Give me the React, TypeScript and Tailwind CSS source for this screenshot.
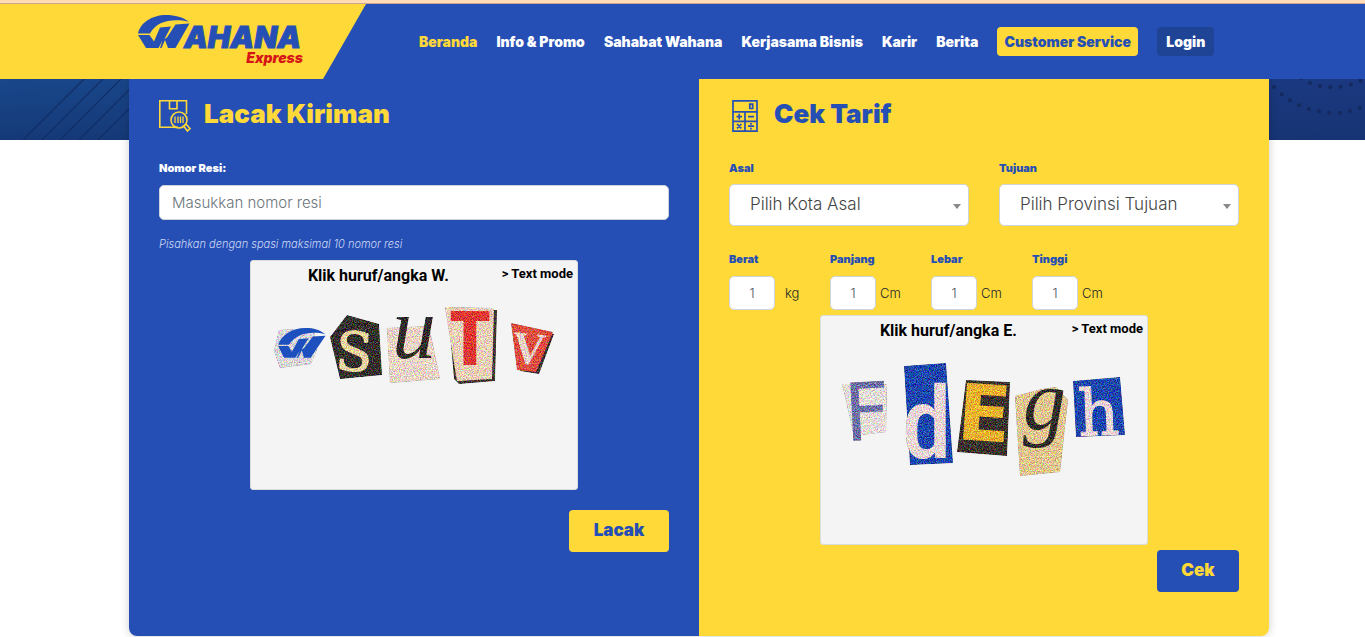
import React from "react";

const navLinks = ["Beranda", "Info & Promo", "Sahabat Wahana", "Kerjasama Bisnis", "Karir", "Berita"];

function Emblem() {
  return (
    <>
      <path d="M0 18.6C2 8 14 0 28 0C37 0 45 2 51 7C46 5.6 43 5.3 38 5.3C27 5.3 17 9 12 18.6Z" />
      <path d="M0 20H11.5L16 26.5L22 12.5L33 11.5L26.5 24L29 22.5L37.5 9.5L51.5 8.5L37.5 33H30L27 25L23.5 33H22L24.5 25.5L20.5 33H8Z" />
    </>
  );
}

function Logo() {
  return (
    <svg viewBox="0 0 168 54" className="h-[54px] w-[168px] shrink-0 overflow-visible" role="img" aria-label="Wahana Express">
      <g fill="#264fb5">
        <Emblem />
        <text x="46" y="33" fontFamily="Inter, sans-serif" fontWeight="900" fontStyle="italic" fontSize="30" stroke="#264fb5" strokeWidth="0.9">AHANA</text>
      </g>
      <text x="165" y="48" textAnchor="end" fill="#d61518" fontFamily="Inter, sans-serif" fontWeight="900" fontStyle="italic" fontSize="14">Express</text>
    </svg>
  );
}

function Header() {
  return (
    <header className="relative z-10 border-t-[3px] border-[#ffdcb5] bg-[#264fb5]">
      <div className="flex h-[76px] items-center border-t border-[#c9a68f]">
        <div className="flex h-full w-[366px] shrink-0 items-center justify-end bg-[#ffd938] pr-[60px] [clip-path:polygon(0_0,100%_0,323px_100%,0_100%)]">
          <a href="#beranda"><Logo /></a>
        </div>
        <nav className="ml-[53px] flex items-center gap-[19px] whitespace-nowrap text-[14px] font-black text-white">
          {navLinks.map((label, i) => (
            <a key={label} href="#" className={i === 0 ? "text-[#ffd938]" : ""}>{label}</a>
          ))}
          <a href="#" className="flex h-[29px] w-[141px] items-center justify-center rounded bg-[#ffd938] text-[#264fb5]">Customer Service</a>
          <a href="#" className="flex h-[29px] w-[57px] items-center justify-center rounded bg-[#1f4496]">Login</a>
        </nav>
      </div>
    </header>
  );
}

function TrackIcon() {
  return (
    <svg viewBox="0 0 32 32" className="size-8" fill="none" stroke="#ffd938" strokeWidth="1.6" aria-hidden="true">
      <path d="M19 27.3H.8V.8H27.5V14M10.5 1V8.8H18V1" />
      <circle cx="20" cy="20" r="8" />
      <path d="M16 16.5V23M19 16.5V23M21.5 16.5V23M24 16.5V23" strokeWidth="1.3" />
      <path d="M24.5 26L27 24L31 28.5L28.4 31Z" />
    </svg>
  );
}

function CalcIcon() {
  return (
    <svg viewBox="0 0 32 32" className="size-8" fill="none" stroke="#264fb5" strokeWidth="1.7" aria-hidden="true">
      <path d="M4 .9H28V31.1H4ZM4 11.8H28M4 21.3H28M16 11.8V31M20.8 4.2H23.7V8.5H20.8Z" />
      <path d="M7.5 16.6H13M10.2 13.8V19.4M19 16.6H25M8 24L12.4 28.4M12.4 24L8 28.4M19 26.2H25M22 23V24.8M22 27.7V29.4" />
    </svg>
  );
}

function Noise({ id }: { id: string }) {
  return (
    <filter id={id} x="0" y="0" width="100%" height="100%" colorInterpolationFilters="sRGB">
      <feTurbulence type="fractalNoise" baseFrequency="0.85" numOctaves={3} seed={4} />
      <feColorMatrix values="2.2 0 0 0 -0.6  0 2.2 0 0 -0.6  0 0 2.2 0 -0.6  0 0 0 0 1" result="n" />
      <feComposite in="SourceGraphic" in2="n" operator="arithmetic" k2={1} k3={0.5} k4={-0.25} result="m" />
      <feComposite in="m" in2="SourceAlpha" operator="in" />
    </filter>
  );
}

function TrackLetters() {
  return (
    <svg viewBox="1 0 326 202" className="block w-full overflow-visible" role="img" aria-label="W S u T V">
      <defs><Noise id="grain-a" /></defs>
      <g filter="url(#grain-a)" transform="translate(0 -27)">
        <path d="M29 70L64 68L67 90L61 104L30 108L24 91Z" fill="#dcd6dc" />
        <path d="M97 55L129 64L132 115L90 119L80 77Z" fill="#34302b" />
        <text x="86" y="111" fontFamily="DejaVu Serif, serif" fontSize="54" fill="#efd5a0" stroke="#efd5a0" transform="rotate(4 106 90)">S</text>
        <path d="M137 68L179 66L190 119L140 123Z" fill="#eed6c6" />
        <text x="142" y="98" fontFamily="Liberation Serif, serif" fontStyle="italic" fontSize="88" fill="#302b27">u</text>
        <path d="M198 49L247 50L245 121L209 124L204 119Z" fill="#3c332f" />
        <path d="M195 47L244 48L242 119L207 121Z" fill="#efd0b8" />
        <text x="220" y="105" textAnchor="middle" fontFamily="Roboto Condensed, Roboto, sans-serif" fontWeight="900" fontSize="76" fill="#e23832">T</text>
        <path d="M264 65L304 74L289 114L270 111Z" fill="#3c3030" />
        <path d="M261 63L303 72L286 112L267 110Z" fill="#e04f40" />
        <text x="262" y="104" fontFamily="Liberation Serif, serif" fontWeight="700" fontSize="46" fill="#efd6cb" transform="rotate(6 280 88)">V</text>
      </g>
      <g fill="#1d50be" transform="translate(30 41) skewX(-6) scale(0.9)">
        <Emblem />
      </g>
    </svg>
  );
}

function RateLetters() {
  return (
    <svg viewBox="1 0 326 202" className="block w-full overflow-visible" role="img" aria-label="F d E g h">
      <defs><Noise id="grain-b" /></defs>
      <g filter="url(#grain-b)" transform="translate(0 -27)">
        <path d="M22 69L67 69L66 117L34 121Z" fill="#e9dfdb" />
        <text x="24" y="125" fontFamily="DejaVu Sans, sans-serif" fontSize="80" fill="#6d70a4" transform="rotate(-3 48 96)">F</text>
        <path d="M84 51L126 48L133 148L90 150Z" fill="#1a47ad" />
        <text x="82" y="143" fontFamily="Roboto Condensed, Roboto, sans-serif" fontWeight="500" fontSize="100" fill="#f0d8d8">d</text>
        <path d="M146 65L190 67L187 141L137 137Z" fill="#3a322c" />
        <text x="138" y="126" fontFamily="DejaVu Sans, sans-serif" fontWeight="700" fontSize="78" fill="#edb22e" transform="rotate(4 165 98)">E</text>
        <path d="M195 81L222 74L236 72L248 85L240 157L200 161Z" fill="#e4c690" />
        <text x="203" y="114" fontFamily="Liberation Serif, serif" fontStyle="italic" fontSize="86" fill="#302b27">g</text>
        <path d="M253 66L300 62L305 120L256 122Z" fill="#1a47ad" />
        <text x="258" y="120" fontFamily="DejaVu Serif, serif" fontSize="64" fill="#f0d8d8" stroke="#f0d8d8" transform="rotate(-2 278 96)">h</text>
      </g>
    </svg>
  );
}

function LetterPicker({ target, children }: { target: string; children: React.ReactNode }) {
  return (
    <div className="mx-auto w-[328px] rounded-[3px] border border-[#dcdcdc] bg-[#f4f4f4] font-['Roboto',sans-serif] text-black">
      <div className="flex h-[26px] items-center px-1 font-bold">
        <p className="flex-1 pt-1 text-center text-[16px] leading-5">Klik huruf/angka {target}.</p>
        <button type="button" className="text-[13px] leading-5">&gt; Text mode</button>
      </div>
      {children}
    </div>
  );
}

function SelectField({ id, label, text }: { id: string; label: string; text: string }) {
  return (
    <div className="flex-1">
      <label htmlFor={id} className="block text-[11px] leading-4 font-black">{label}</label>
      <div className="relative mt-2">
        <select id={id} className="h-[42px] w-full appearance-none rounded-[5px] border border-[#ced4da] bg-white pr-8 pb-px pl-5 text-[17px] font-light text-[#444]">
          <option>{text}</option>
        </select>
        <span className="pointer-events-none absolute top-5 right-2 border-x-4 border-t-5 border-x-transparent border-t-[#888]" />
      </div>
    </div>
  );
}

function SizeField({ id, label, unit }: { id: string; label: string; unit: string }) {
  return (
    <div className="w-[101px]">
      <label htmlFor={id} className="block text-[11px] leading-4 font-black">{label}</label>
      <div className={unit === "kg" ? "mt-[9px] flex items-center gap-2.5" : "mt-[9px] flex items-center gap-1"}>
        <input id={id} defaultValue="1" className="h-[34px] w-[46px] rounded-[5px] border border-[#ced4da] bg-white text-center text-[13px] font-light text-[#495057]" />
        <span className="text-[13px] leading-5 font-light text-[#212529]">{unit}</span>
      </div>
    </div>
  );
}

function HeroBackground() {
  return (
    <svg className="absolute inset-x-0 top-0 -z-10 h-[61px] w-full" preserveAspectRatio="none" viewBox="0 0 1365 61" aria-hidden="true">
      <defs>
        <linearGradient id="sky" x1="0" y1="0" x2="1" y2="0">
          <stop offset="0" stopColor="#18478a" />
          <stop offset="1" stopColor="#1b3880" />
        </linearGradient>
        <linearGradient id="shade" x1="0" y1="0" x2="0" y2="1">
          <stop offset="0" stopColor="#14306b" stopOpacity="0" />
          <stop offset="1" stopColor="#14306b" stopOpacity=".6" />
        </linearGradient>
      </defs>
      <path d="M0 0H1365V61H0Z" fill="url(#sky)" />
      <path d="M0 0H1365V61H0Z" fill="url(#shade)" />
      <path d="M23 61L84 0M42 61L103 0M60 61L121 0M79 61L140 0M98 61L159 0" stroke="#122e66" strokeWidth="1.2" />
      <g fill="none" stroke="#142a5e" strokeWidth="4" strokeLinecap="round" strokeDasharray="0 10.4">
        <path d="M1274 8C1292 27 1312 33 1334 34C1345 34 1355 31 1368 26" />
        <path d="M1301 -1C1318 11 1342 12 1366 -1" />
      </g>
    </svg>
  );
}

export default function App() {
  return (
    <div className="min-h-screen bg-white font-['Inter',sans-serif]">
      <Header />
      <main className="relative isolate pl-[33px]">
        <HeroBackground />
        <div className="mx-auto grid max-w-[1140px] grid-cols-2 rounded-b-lg shadow-[0_0_10px_rgba(0,0,0,0.2)]">
          <form className="flex min-h-[557px] flex-col rounded-bl-lg bg-[#264fb5] px-[30px] pt-[21px] pb-11 text-white">
            <h2 className="flex h-8 items-center gap-[13px] text-[26px] leading-7 font-black text-[#ffd938]">
              <TrackIcon /><span className="pb-1">Lacak Kiriman</span>
            </h2>
            <label htmlFor="resi" className="mt-7 block text-[11px] leading-4 font-black">Nomor Resi:</label>
            <input id="resi" placeholder="Masukkan nomor resi" className="mt-[9px] h-[35px] w-full rounded-[5px] border border-[#ced4da] bg-white px-3 text-[15px] font-light text-[#495057] placeholder:text-[#6c757d]" />
            <p className="mt-4 mb-2 text-[11px] leading-4 font-light text-[#ccd8f5] italic">Pisahkan dengan spasi maksimal 10 nomor resi</p>
            <LetterPicker target="W"><TrackLetters /></LetterPicker>
            <button type="button" className="mt-5 h-[42px] w-[100px] self-end rounded bg-[#ffd938] text-[17px] font-black text-[#264fb5]">Lacak</button>
          </form>
          <form className="flex flex-col rounded-br-lg bg-[#ffd938] px-[30px] pt-[21px] pb-11 text-[#264fb5]">
            <h2 className="flex h-8 items-center gap-[13px] text-[26px] leading-7 font-black">
              <CalcIcon /><span className="pb-1">Cek Tarif</span>
            </h2>
            <div className="mt-7 flex gap-[30px]">
              <SelectField id="asal" label="Asal" text="Pilih Kota Asal" />
              <SelectField id="tujuan" label="Tujuan" text="Pilih Provinsi Tujuan" />
            </div>
            <div className="mt-[25px] mb-[5px] flex">
              <SizeField id="berat" label="Berat" unit="kg" />
              <SizeField id="panjang" label="Panjang" unit="Cm" />
              <SizeField id="lebar" label="Lebar" unit="Cm" />
              <SizeField id="tinggi" label="Tinggi" unit="Cm" />
            </div>
            <LetterPicker target="E"><RateLetters /></LetterPicker>
            <button type="button" className="mt-[5px] h-[42px] w-[82px] self-end rounded bg-[#264fb5] text-[17px] font-black text-[#ffd938]">Cek</button>
          </form>
        </div>
      </main>
    </div>
  );
}
